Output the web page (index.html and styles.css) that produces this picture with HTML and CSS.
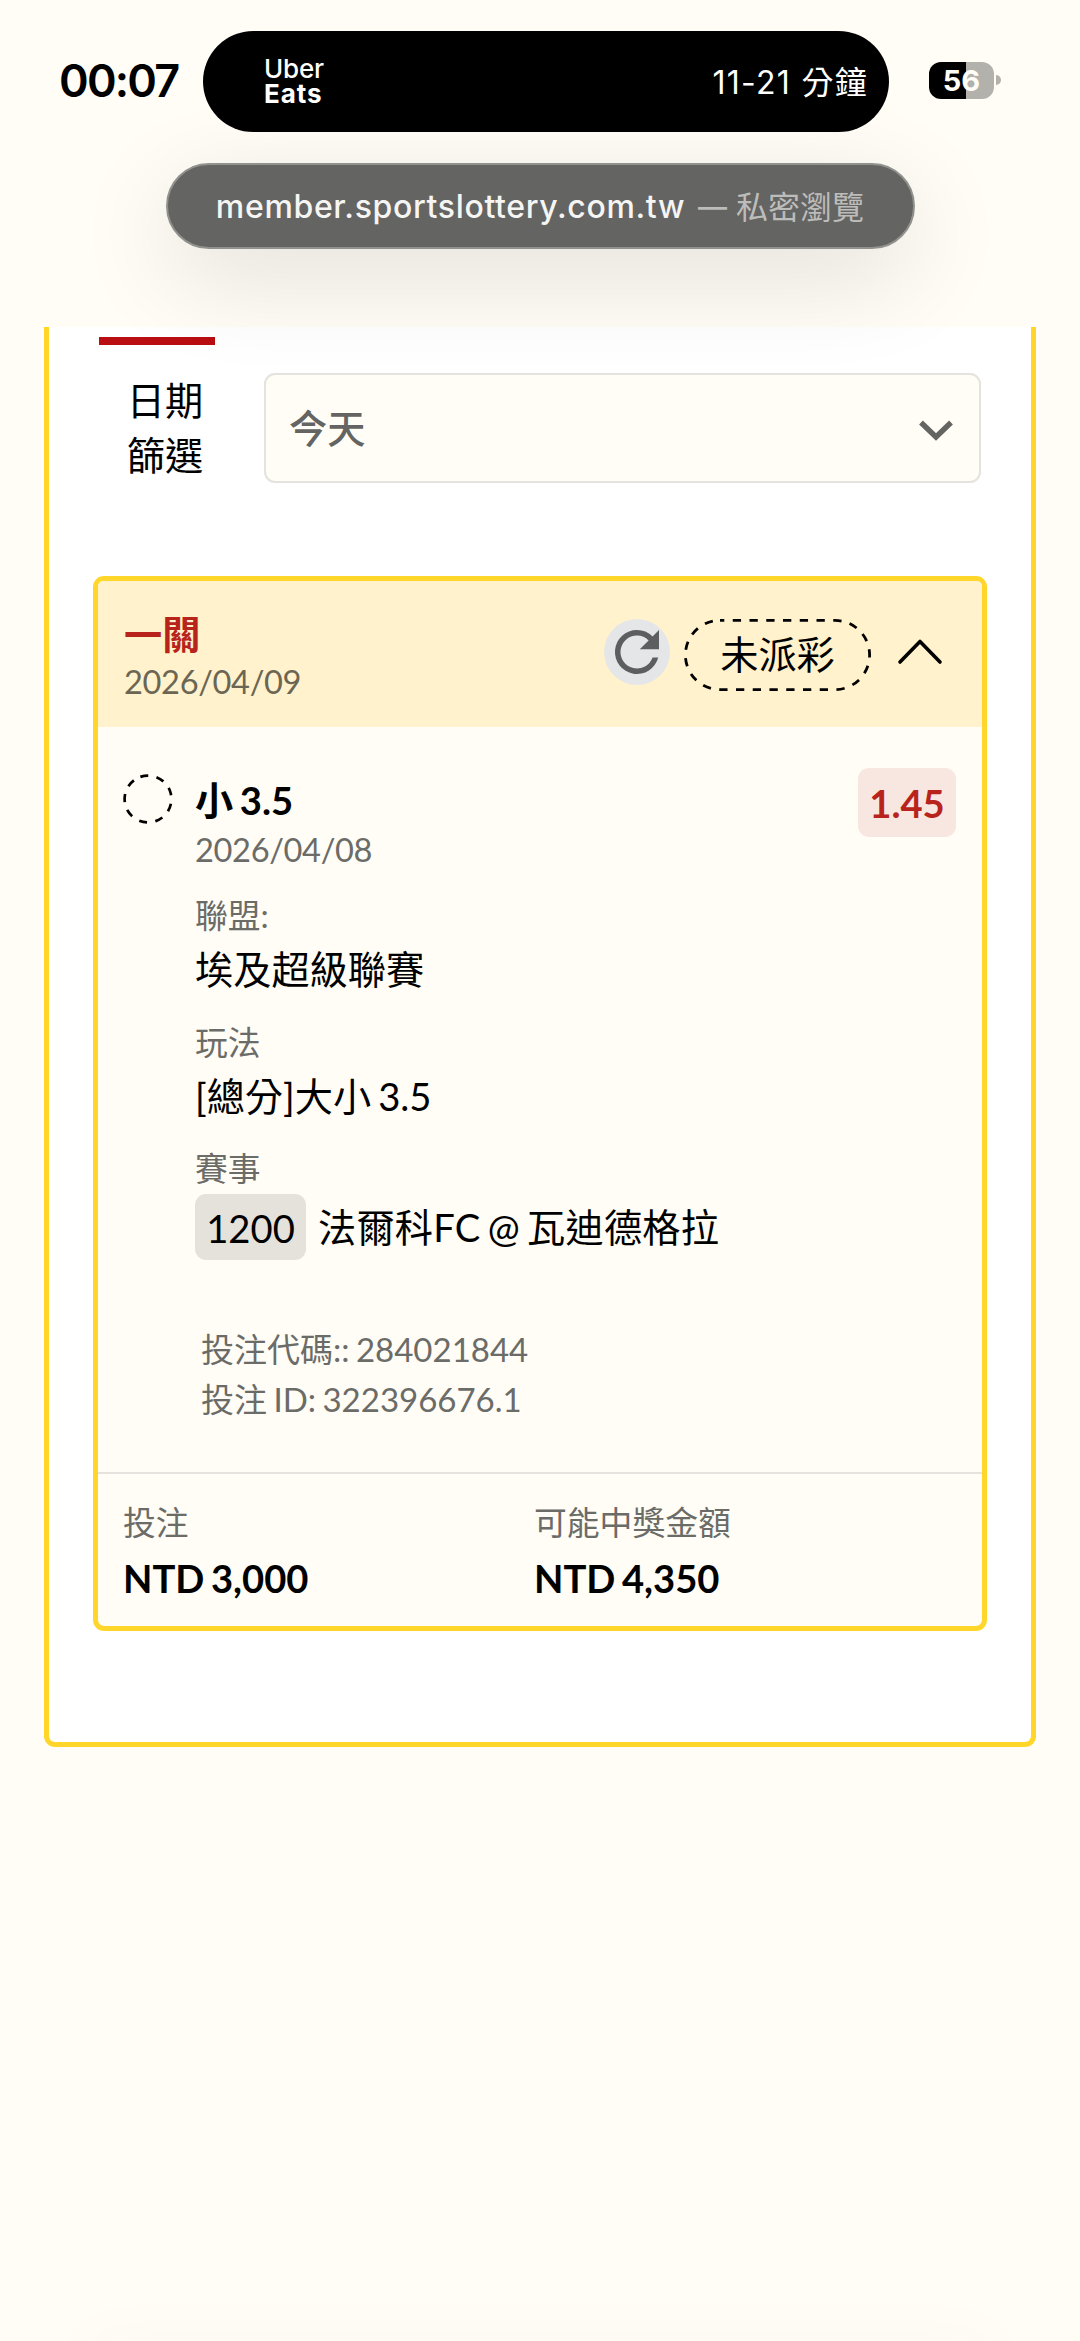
FILE: index.html
```html
<!DOCTYPE html>
<html lang="zh-Hant-TW">
<head>
<meta charset="utf-8">
<title>投注紀錄</title>
<link rel="stylesheet" href="styles.css">
</head>
<body>
<div class="screen">
  <header class="chrome">
    <div class="status">
      <div class="time">00:07</div>
      <div class="island">
        <div class="brand"><span class="brand-top">Uber</span><span class="brand-bottom">Eats</span></div>
        <div class="eta">11-21 分鐘</div>
      </div>
      <div class="battery"><div class="level">56</div><div class="nub"></div></div>
    </div>
    <div class="address"><span class="host">member.sportslottery.com.tw</span><span class="dash">—</span><span class="mode">私密瀏覽</span></div>
  </header>
  <main class="panel">
    <div class="tab-mark"></div>
    <div class="filter">
      <div class="filter-label">日期<br>篩選</div>
      <div class="select">
        <span class="choice">今天</span>
        <svg class="caret" width="36" height="24" viewBox="0 0 36 24"><path d="M3 4.5 18 19 33 4.5" fill="none" stroke="#646462" stroke-width="5.4"/></svg>
      </div>
    </div>
    <section class="bet">
      <div class="bet-head">
        <div class="bet-title"><div class="parlay">一關</div><div class="date">2026/04/09</div></div>
        <div class="refresh"><svg width="66" height="66" viewBox="0 0 24 24"><path fill="#5d5e5f" d="M17.65 6.35A7.96 7.96 0 0 0 12 4a8 8 0 1 0 7.73 10h-2.08A6 6 0 1 1 12 6c1.66 0 3.14.69 4.22 1.78L13 11h7V4z"/></svg></div>
        <div class="state">
          <svg class="outline" width="187" height="72" viewBox="0 0 187 72"><rect x="1.4" y="1.4" width="184.2" height="69.2" rx="34.6" fill="none" stroke="#000" stroke-width="2.8" stroke-dasharray="8.3 8.45" stroke-dashoffset="4"/></svg>
          未派彩
        </div>
        <svg class="fold" width="48" height="30" viewBox="0 0 48 30"><path d="M4 26 24 5.5 44 26" fill="none" stroke="#000" stroke-width="3.6" stroke-linecap="round" stroke-linejoin="round"/></svg>
      </div>
      <div class="bet-body">
        <svg class="ring" width="50" height="50" viewBox="0 0 50 50"><circle cx="25" cy="25" r="23.4" fill="none" stroke="#000" stroke-width="2.7" stroke-dasharray="8 8.336" transform="rotate(-109 25 25)"/></svg>
        <div class="pick">
          <div class="pick-name">小 3.5</div>
          <div class="date">2026/04/08</div>
          <dl class="facts">
            <div class="fact"><dt>聯盟:</dt><dd>埃及超級聯賽</dd></div>
            <div class="fact"><dt>玩法</dt><dd>[總分]大小 3.5</dd></div>
            <div class="fact"><dt>賽事</dt><dd class="match"><span class="code">1200</span><span class="teams">法爾科FC @ 瓦迪德格拉</span></dd></div>
          </dl>
          <div class="ids"><div>投注代碼:: 284021844</div><div>投注 ID: 322396676.1</div></div>
        </div>
        <div class="odds">1.45</div>
      </div>
      <div class="bet-foot">
        <div class="sum"><div class="sum-label">投注</div><div class="sum-value">NTD 3,000</div></div>
        <div class="sum"><div class="sum-label">可能中獎金額</div><div class="sum-value">NTD 4,350</div></div>
      </div>
    </section>
  </main>
  <div class="toolbar-glow"></div>
</div>
</body>
</html>
```
FILE: styles.css
```css
* { box-sizing: border-box; }
body {
  margin: 0;
  background: #fffdf5;
  color: #000;
  font-family: Lato, "Noto Sans CJK TC", sans-serif;
  font-size: 38.2px;
  word-spacing: -2.7px;
}
.screen { width: 1080px; height: 2341px; overflow: hidden; display: flex; flex-direction: column; }

/* browser and phone chrome */
.chrome { position: relative; z-index: 1; height: 327px; flex: none; padding-top: 31px; display: flex; flex-direction: column; align-items: center; font-family: Inter, "Noto Sans CJK TC", sans-serif; word-spacing: 0; }
.status { position: relative; z-index: 1; width: 100%; height: 101px; display: flex; align-items: center; }
.time { width: 203px; padding-left: 59px; font-size: 45px; font-weight: 600; line-height: 50px; padding-bottom: 2px; letter-spacing: -1.8px; white-space: nowrap; }
.island { width: 686px; height: 101px; border-radius: 51px; background: #000; color: #fff; display: flex; align-items: center; justify-content: space-between; padding: 0 21px 0 61px; }
.brand { display: flex; flex-direction: column; font-size: 26px; line-height: 24.5px; }
.brand-top { font-weight: 500; letter-spacing: -.2px; }
.brand-bottom { font-weight: 700; letter-spacing: .9px; }
.eta { font-size: 32px; letter-spacing: 1.3px; padding-bottom: 4px; white-space: nowrap; }
.battery { margin-left: 40px; display: flex; align-items: center; gap: 2px; padding-bottom: 3px; }
.level { width: 65px; height: 37px; border-radius: 12px; background: linear-gradient(90deg, #000 57%, #b2b1ac 57%); color: #fffdf5; font-size: 29px; font-weight: 700; line-height: 37px; text-align: center; }
.nub { width: 5px; height: 10px; border-radius: 0 5px 5px 0; background: #b2b1ac; }
.address { margin-top: 31px; width: 749px; height: 86px; border-radius: 43px; border: 2px solid #91918e; background: #646462; color: #f5f5f4; box-shadow: 0 28px 100px rgba(0, 0, 0, .12); display: flex; align-items: center; justify-content: center; font-size: 32px; white-space: nowrap; }
.host { font-weight: 500; letter-spacing: .65px; }
.dash { margin: 0 9px 0 13px; font-size: 29px; font-weight: 500; color: #bcbcba; }
.mode { color: #bcbcba; padding-bottom: 3px; }

/* page panel */
.panel { margin: 0 44px; height: 1420px; flex: none; border: 5px solid #ffd629; border-top: 0; border-radius: 0 0 11px 11px; background: #fff; padding: 10px 44px 0; }
.tab-mark { width: 116px; height: 8px; margin-left: 6px; background: #b90e12; }
.filter { margin: 28px 6px 0 6px; display: flex; align-items: center; }
.filter-label { width: 165px; padding-right: 33px; line-height: 55px; text-align: center; }
.select { flex: 1; height: 110px; border: 2.7px solid #e6e2dd; border-radius: 11px; background: #fffdf5; color: #646462; padding: 0 25px 0 23px; display: flex; align-items: center; justify-content: space-between; }
.choice { font-weight: 500; padding-bottom: 4px; }
.caret { margin-top: 3px; }

/* bet slip */
.bet { margin-top: 93px; height: 1055px; border: 5px solid #ffd629; border-radius: 11px; background: #fffdf5; display: flex; flex-direction: column; }
.bet-head { height: 146px; flex: none; background: #fff2cc; padding: 0 38px 0 26px; display: flex; align-items: flex-start; border-radius: 5px 5px 0 0; }
.bet-title { flex: 1; padding-top: 28px; }
.parlay { line-height: 50px; color: #b8241b; font-weight: 700; }
.date { font-size: 32.6px; line-height: 45px; letter-spacing: -.35px; color: #6b6b68; }
.bet-head .date { color: #6b6654; }
.refresh { margin-top: 38px; width: 66px; height: 66px; border-radius: 50%; background: #e5e6e8; }
.refresh svg { display: block; }
.state { position: relative; margin: 38px 25px 0 14px; width: 187px; height: 72px; line-height: 70px; text-align: center; }
.outline { position: absolute; inset: 0; }
.fold { margin-top: 55px; }
.bet-body { height: 745px; flex: none; padding: 41px 26px 0 25px; display: flex; align-items: flex-start; }
.ring { margin: 6px 22px 0 0; flex: none; }
.pick { flex: 1; padding-top: 8px; }
.pick-name { line-height: 49px; font-weight: 700; }
.pick > .date { line-height: 49px; }
.facts { margin: 19px 0 0; display: flex; flex-direction: column; gap: 20.5px; }
.facts dt { font-size: 32.8px; line-height: 46px; color: #6b6b68; }
.facts dd { margin: 0; line-height: 60px; height: 60px; }
.facts .match { margin: 2px 0 0; display: flex; align-items: center; gap: 12px; height: 66px; }
.code { width: 111px; height: 66px; border-radius: 11px; background: #e5e2dc; text-align: center; line-height: 68px; }
.teams { white-space: nowrap; letter-spacing: .2px; }
.ids { margin: 65px 0 0 6px; font-size: 33px; line-height: 49.7px; word-spacing: -2px; color: #6b6b68; }
.odds { width: 98px; height: 69px; border-radius: 11px; background: #f8e7e1; color: #b8241b; font-weight: 700; line-height: 71px; text-align: center; }
.bet-foot { flex: 1; border-top: 2.7px solid #e6e3de; padding: 26px 25px 0; display: grid; grid-template-columns: 411px 1fr; }
.sum-label { font-size: 32.8px; line-height: 46px; color: #6b6b68; }
.sum-value { margin-top: 2px; line-height: 60px; font-weight: 700; white-space: nowrap; }

/* faint shade of the toolbar waiting below the viewport */
.toolbar-glow { margin: auto 110px 0; height: 1px; flex: none; box-shadow: 0 30px 70px 24px rgba(0, 0, 0, .035); }
```
